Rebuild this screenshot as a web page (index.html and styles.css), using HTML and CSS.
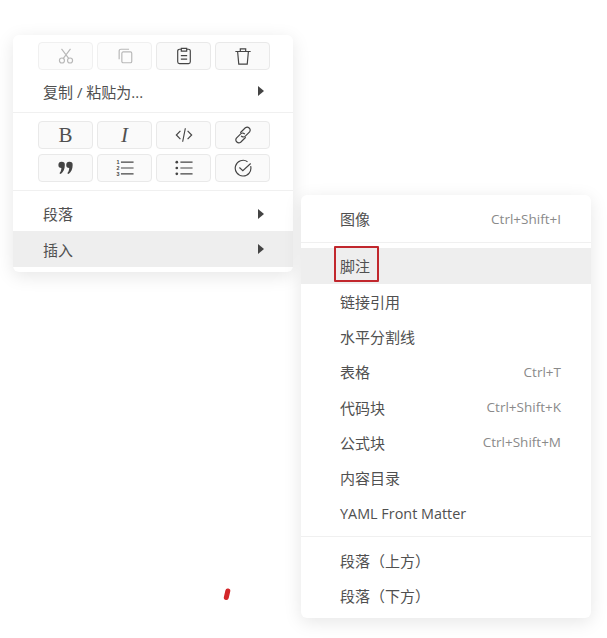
FILE: index.html
```html
<!DOCTYPE html>
<html lang="zh-CN">
<head>
  <meta charset="UTF-8" />
  <title>Context Menu</title>
  <link rel="stylesheet" href="styles.css">
</head>
<body>

  <!-- Main context menu -->
  <div class="menu menu-main">
    <div class="tool-row">
      <button class="tool-btn disabled">
        <svg viewBox="0 0 20 20"><circle cx="5.500" cy="15" r="2.800"/><circle cx="14.500" cy="15" r="2.800"/><path d="M7 12.600 15 2M13 12.600 5 2"/></svg>
      </button>
      <button class="tool-btn disabled">
        <svg viewBox="0 0 20 20"><path d="M3.500 13.500V4.500a2 2 0 0 1 2-2h9"/><rect x="6.500" y="5.500" width="11" height="12" rx="1.500"/></svg>
      </button>
      <button class="tool-btn">
        <svg viewBox="0 0 20 20"><path d="M7 2.500H5a2 2 0 0 0-2 2v12a2 2 0 0 0 2 2h10a2 2 0 0 0 2-2v-12a2 2 0 0 0-2-2h-2"/><path d="M7 1.500h6v3H7zM6.500 9.500h7M6.500 13.500h7"/></svg>
      </button>
      <button class="tool-btn">
        <svg viewBox="0 0 20 20"><path d="M1.500 5h17M7 5V2h6v3M4 5l1.300 14h9.400L16 5"/></svg>
      </button>
    </div>
    <div class="menu-item first"><span>复制 / 粘贴为...</span><i class="arrow"></i></div>
    <div class="sep sep-tools"></div>
    <div class="tool-row">
      <button class="tool-btn letter">B</button>
      <button class="tool-btn letter italic">I</button>
      <button class="tool-btn">
        <svg viewBox="0 0 20 20"><path d="M6 5.500 1.500 10 6 14.500M14 5.500l4.500 4.500-4.500 4.500M11.500 2.500l-3 15"/></svg>
      </button>
      <button class="tool-btn">
        <svg viewBox="0 0 20 20"><path d="M8 11a3 3 0 0 0 4.300.5l5-5a3.300 3.300 0 0 0-4.700-4.500L7 7.500"/><path d="M12 9a3 3 0 0 0-4.300-.5l-5 5a3.300 3.300 0 0 0 4.700 4.500L13 12.500" transform="translate(0 0)"/></svg>
      </button>
    </div>
    <div class="tool-row second">
      <button class="tool-btn">
        <svg viewBox="0 0 20 20" class="solid"><path d="M5.200 3a3.500 3.500 0 0 1 3.500 3.700c0 4-1.500 8-4.500 10l-1.500-1c1.200-1.200 2-2.700 2.200-5.700a3.500 3.500 0 0 1 .3-7zM13.900 3a3.500 3.500 0 0 1 3.500 3.700c0 4-1.500 8-4.500 10l-1.500-1c1.200-1.200 2-2.700 2.200-5.700a3.500 3.500 0 0 1 .3-7z"/></svg>
      </button>
      <button class="tool-btn">
        <svg viewBox="0 0 20 20"><text x="0.500" y="6">1</text><text x="0.500" y="12.500">2</text><text x="0.500" y="19">3</text><path d="M5.500 3.500h14M5.500 10h14M5.500 16.500h14"/></svg>
      </button>
      <button class="tool-btn">
        <svg viewBox="0 0 20 20"><circle class="dot" cx="2" cy="3.500" r="1.500"/><circle class="dot" cx="2" cy="10" r="1.500"/><circle class="dot" cx="2" cy="16.500" r="1.500"/><path d="M6 3.500h13.500M6 10h13.500M6 16.500h13.500"/></svg>
      </button>
      <button class="tool-btn">
        <svg viewBox="0 0 20 20"><path d="M18.500 8a8.700 8.700 0 1 1-3.500-5"/><path d="M6 9.500l3.800 3.500L18.500 5"/></svg>
      </button>
    </div>
    <div class="sep sep-after"></div>
    <div class="menu-item para"><span>段落</span><i class="arrow"></i></div>
    <div class="menu-item active"><span>插入</span><i class="arrow"></i></div>
  </div>

  <!-- Insert submenu -->
  <div class="menu menu-sub">
    <div class="sub-item"><span>图像</span><span class="key">Ctrl+Shift+I</span></div>
    <div class="sep"></div>
    <div class="sub-item active"><span>脚注</span></div>
    <div class="sub-item"><span>链接引用</span></div>
    <div class="sub-item"><span>水平分割线</span></div>
    <div class="sub-item"><span>表格</span><span class="key">Ctrl+T</span></div>
    <div class="sub-item"><span>代码块</span><span class="key">Ctrl+Shift+K</span></div>
    <div class="sub-item"><span>公式块</span><span class="key">Ctrl+Shift+M</span></div>
    <div class="sub-item"><span>内容目录</span></div>
    <div class="sub-item"><span class="latin">YAML Front Matter</span></div>
    <div class="sep"></div>
    <div class="sub-item"><span>段落（上方）</span></div>
    <div class="sub-item"><span>段落（下方）</span></div>
  </div>

  <!-- Red annotations on top of the screenshot -->
  <div class="highlight-box"></div>
  <svg class="red-mark" viewBox="0 0 8 14"><path d="M4.800 3 3.300 9.500"/></svg>

</body>
</html>
```

FILE: styles.css
```css
* {
  box-sizing: border-box;
}

body {
  margin: 0;
  width: 607px;
  height: 638px;
  position: relative;
  overflow: hidden;
  background: #fff;
  font-family: 'Open Sans', 'Noto Sans CJK SC', sans-serif;
  font-size: 15px;
  color: #505050;
}

.menu {
  position: absolute;
  background: #fff;
  border-radius: 6px;
  box-shadow: 0 4px 18px rgba(0,0,0,0.1);
}

.menu-main {
  left: 13px;
  top: 35px;
  width: 280px;
  height: 237px;
  padding-top: 7px;
}

.menu-sub {
  left: 301px;
  top: 195px;
  width: 290px;
  height: 423px;
  padding-top: 6px;
}

.tool-row {
  display: grid;
  grid-template-columns: 55px 55px 55px 55px;
  column-gap: 4px;
  margin-left: 25px;
  height: 28px;
}

.tool-row.second {
  margin-top: 5px;
}

.tool-btn {
  display: flex;
  align-items: center;
  justify-content: center;
  padding: 0;
  background: #fafafa;
  border: 1px solid #e9e9e9;
  border-radius: 4px;
  color: #444;
}

.tool-btn svg {
  width: 18px;
  height: 18px;
  fill: none;
  stroke: currentColor;
  stroke-width: 1.300;
}

.tool-btn svg.solid {
  fill: currentColor;
  stroke: none;
}

.tool-btn svg text {
  font-family: 'Liberation Sans', sans-serif;
  font-size: 6px;
  font-weight: bold;
  fill: currentColor;
  stroke: none;
}

.tool-btn svg .dot {
  fill: currentColor;
  stroke: none;
}

.tool-btn.disabled {
  color: #b8b8b8;
  background: #fcfcfc;
  border-color: #f0f0f0;
}

.letter {
  font-family: 'Liberation Serif', serif;
  font-size: 21px;
  color: #505050;
}

.italic {
  font-style: italic;
}

.menu-item {
  display: flex;
  align-items: center;
  justify-content: space-between;
  height: 36px;
  padding: 0 29px 0 30px;
}

.menu-item.first {
  margin-top: 3px;
}

.menu-item.para {
  height: 35px;
}

.menu-item.active,
.sub-item.active {
  background: #eeeeee;
}

.arrow {
  width: 0;
  height: 0;
  border-left: 6px solid #444;
  border-top: 5px solid transparent;
  border-bottom: 5px solid transparent;
}

.sep {
  height: 1px;
  margin: 5.500px 0;
  background: #f0f0f0;
}

.sep-tools {
  margin: 3px 0 8px;
}

.sep-after {
  margin: 8px 0 5px;
}

.sub-item {
  display: flex;
  align-items: center;
  justify-content: space-between;
  height: 35.300px;
  padding: 0 30px 0 39px;
}

.latin {
  font-size: 14.400px;
}

.key {
  font-size: 13.500px;
  color: #8a8a8a;
}

.highlight-box {
  position: absolute;
  left: 334px;
  top: 246px;
  width: 45px;
  height: 36px;
  border: 2px solid #c1272d;
  border-radius: 1px;
}

.red-mark {
  position: absolute;
  left: 223px;
  top: 588px;
  width: 8px;
  height: 14px;
  fill: none;
  stroke: #d3262a;
  stroke-width: 5;
  stroke-linecap: round;
}
```
